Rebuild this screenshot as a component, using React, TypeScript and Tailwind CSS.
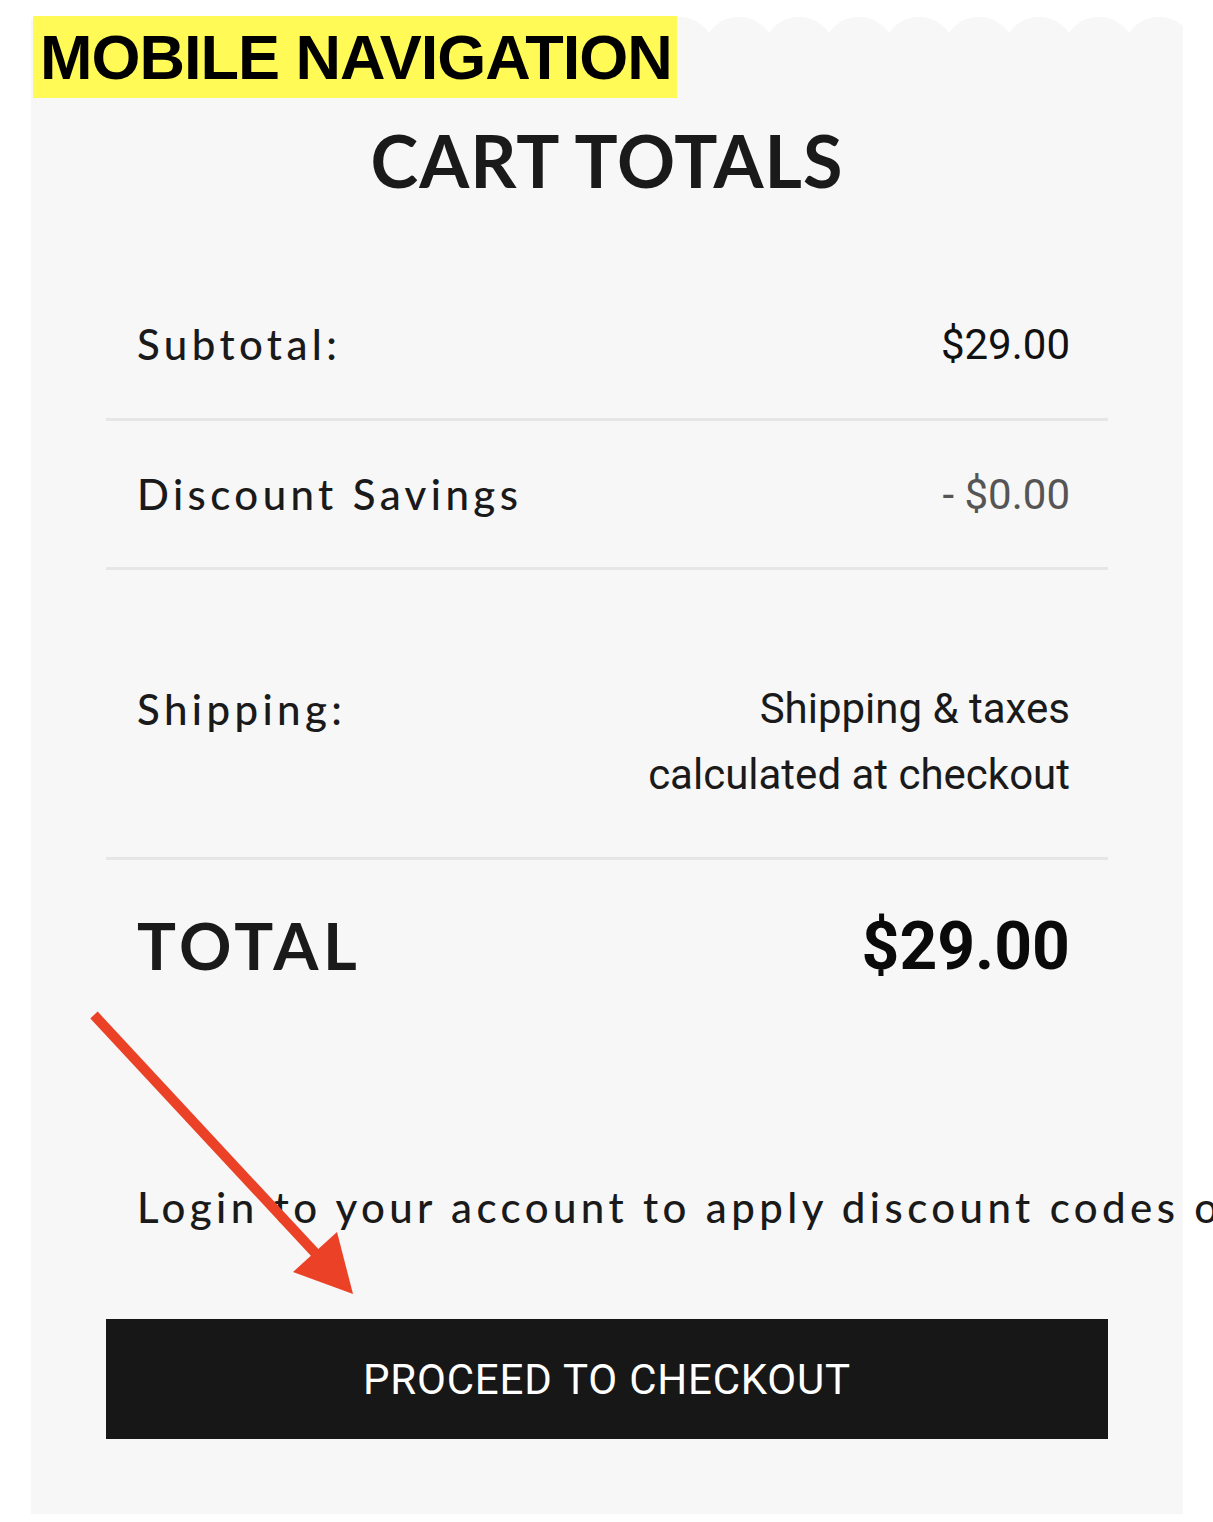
import React from "react";

const label = "font-['Lato',sans-serif] text-[42px] font-medium tracking-[4.4px] text-[#1a1a1a]";
const roboto = "font-['Roboto',sans-serif]";

function Scallops() {
  return (
    <svg width="1152" height="16" viewBox="0 0 1152 16" className="block">
      <defs>
        <pattern id="scallop" x="18" y="0" width="60" height="16" patternUnits="userSpaceOnUse">
          <path d="M0 16 A36 36 0 0 1 60 16 Z" fill="#f7f7f7" />
        </pattern>
      </defs>
      <rect width="1152" height="16" fill="url(#scallop)" />
    </svg>
  );
}

function Arrow() {
  return (
    <svg
      className="absolute left-0 top-0 pointer-events-none"
      width="400"
      height="1310"
      viewBox="0 0 400 1310"
    >
      <line x1="94" y1="1015" x2="318" y2="1256" stroke="#ea4127" strokeWidth="10" />
      <polygon points="293,1272 337,1232 353,1294" fill="#ea4127" />
    </svg>
  );
}

export default function App() {
  return (
    <div className="relative w-full h-[1522px] overflow-hidden bg-white">
      <div className="ml-[31px] mt-[17px] w-[1152px]">
        <Scallops />
        <div className="bg-[#f7f7f7] h-[1481px] pt-[91px]">
          <h1 className="text-center font-['Lato',sans-serif] font-bold text-[72px] tracking-[1px] leading-none text-[#1a1a1a]">
            CART TOTALS
          </h1>

          <div className="mx-[75px] mt-[74px]">
            <div className="flex items-center justify-between h-[151px] border-b-[3px] border-[#e6e6e6] pl-[31px] pr-[38px]">
              <span className={label}>Subtotal:</span>
              <span className={`${roboto} text-[42px] text-[#111]`}>$29.00</span>
            </div>
            <div className="flex items-center justify-between h-[149px] border-b-[3px] border-[#e6e6e6] pl-[31px] pr-[38px]">
              <span className={label}>Discount Savings</span>
              <span className={`${roboto} text-[42px] text-[#555]`}>- $0.00</span>
            </div>
            <div className="flex items-start justify-between h-[290px] border-b-[3px] border-[#e6e6e6] pt-[106px] pl-[31px] pr-[38px]">
              <span className={`${label} leading-[66px]`}>Shipping:</span>
              <span className={`${roboto} text-[42px] leading-[66px] text-right text-[#1a1a1a]`}>
                Shipping &amp; taxes
                <br />
                calculated at checkout
              </span>
            </div>
            <div className="flex items-center justify-between h-[172px] pl-[31px] pr-[38px]">
              <span className="font-['Lato',sans-serif] font-bold text-[65px] tracking-[4.5px] text-[#1a1a1a]">
                TOTAL
              </span>
              <span className={`${roboto} font-bold text-[66px] text-[#0a0a0a]`}>$29.00</span>
            </div>

            <p className={`${label} leading-[42px] mt-[154px] pl-[31px] whitespace-nowrap`}>
              Login to your account to apply discount codes or rewards
            </p>

            <button
              type="button"
              className={`${roboto} mt-[91px] w-full h-[120px] bg-[#171717] text-white text-[42px] tracking-[0.8px]`}
            >
              PROCEED TO CHECKOUT
            </button>
          </div>
        </div>
      </div>

      <div className="absolute left-[33px] top-[16px] w-[644px] h-[82px] bg-[#fffa55] pl-[7px] flex items-center">
        <span className="font-['Liberation_Sans',Arial,sans-serif] font-bold text-[63px] tracking-[-1px] leading-none text-black">
          MOBILE NAVIGATION
        </span>
      </div>

      <Arrow />
    </div>
  );
}
